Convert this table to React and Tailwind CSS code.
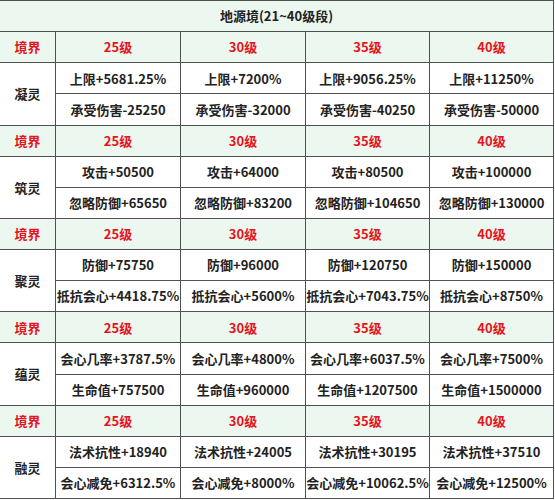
const levels = ["25级", "30级", "35级", "40级"];

const realms = [
  {
    name: "凝灵",
    rows: [
      ["上限+5681.25%", "上限+7200%", "上限+9056.25%", "上限+11250%"],
      ["承受伤害-25250", "承受伤害-32000", "承受伤害-40250", "承受伤害-50000"],
    ],
  },
  {
    name: "筑灵",
    rows: [
      ["攻击+50500", "攻击+64000", "攻击+80500", "攻击+100000"],
      ["忽略防御+65650", "忽略防御+83200", "忽略防御+104650", "忽略防御+130000"],
    ],
  },
  {
    name: "聚灵",
    rows: [
      ["防御+75750", "防御+96000", "防御+120750", "防御+150000"],
      ["抵抗会心+4418.75%", "抵抗会心+5600%", "抵抗会心+7043.75%", "抵抗会心+8750%"],
    ],
  },
  {
    name: "蕴灵",
    rows: [
      ["会心几率+3787.5%", "会心几率+4800%", "会心几率+6037.5%", "会心几率+7500%"],
      ["生命值+757500", "生命值+960000", "生命值+1207500", "生命值+1500000"],
    ],
  },
  {
    name: "融灵",
    rows: [
      ["法术抗性+18940", "法术抗性+24005", "法术抗性+30195", "法术抗性+37510"],
      ["会心减免+6312.5%", "会心减免+8000%", "会心减免+10062.5%", "会心减免+12500%"],
    ],
  },
];

const Cell = ({ className = "", children }) => (
  <div className={"flex items-center justify-center whitespace-nowrap " + className}>
    {children}
  </div>
);

const App = () => {
  return (
    <div className="w-[555px] h-[500px] bg-white overflow-hidden">
      <div
        className="ml-[-1px] w-[555px] h-[499px] p-px gap-px bg-[#4d524f] grid grid-cols-[55px_124px_124px_123px_123px] grid-rows-[repeat(16,minmax(0,1fr))] text-[13px] font-bold text-[#222]"
        style={{ fontFamily: '"Noto Sans CJK SC", "Noto Sans", sans-serif' }}
      >
        <Cell className="col-span-5 bg-[#ebf7ef]">地源境(21~40级段)</Cell>
        {realms.map((realm) => (
          <>
            <Cell key={realm.name + "h"} className="bg-[#ebf7ef] text-[#e5141d]">
              境界
            </Cell>
            {levels.map((lv) => (
              <Cell key={realm.name + lv} className="bg-[#ebf7ef] text-[#e5141d]">
                {lv}
              </Cell>
            ))}
            <Cell key={realm.name} className="row-span-2 bg-white">
              {realm.name}
            </Cell>
            {realm.rows[0].map((v) => (
              <Cell key={v} className="bg-white">
                {v}
              </Cell>
            ))}
            {realm.rows[1].map((v) => (
              <Cell key={v} className="bg-white">
                {v}
              </Cell>
            ))}
          </>
        ))}
      </div>
    </div>
  );
};

export default App;
